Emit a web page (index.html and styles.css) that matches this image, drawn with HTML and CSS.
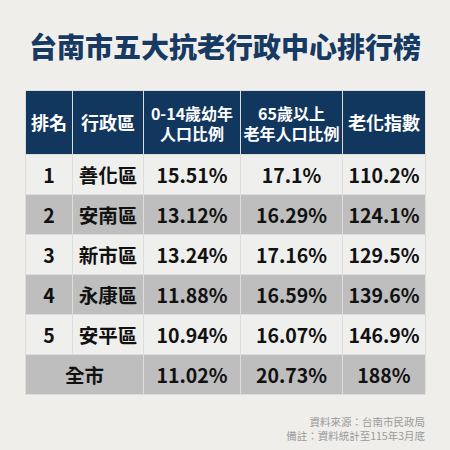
FILE: index.html
```html
<!DOCTYPE html>
<html lang="zh-Hant">
<head>
    <meta charset="UTF-8">
    <title>台南市五大抗老行政中心排行榜</title>
    <link rel="stylesheet" href="styles.css">
</head>
<body>
    <section class="board">
        <h1 class="title">台南市五大抗老行政中心排行榜</h1>
        <table class="rank">
            <colgroup>
                <col class="c-rank">
                <col class="c-area">
                <col class="c-young">
                <col class="c-old">
                <col class="c-index">
            </colgroup>
            <thead>
                <tr>
                    <th>排名</th>
                    <th>行政區</th>
                    <th class="two">0-14歲幼年<br>人口比例</th>
                    <th class="two">65歲以上<br>老年人口比例</th>
                    <th>老化指數</th>
                </tr>
            </thead>
            <tbody>
                <tr class="light">
                    <td>1</td><td>善化區</td><td>15.51%</td><td>17.1%</td><td>110.2%</td>
                </tr>
                <tr class="dark">
                    <td>2</td><td>安南區</td><td>13.12%</td><td>16.29%</td><td>124.1%</td>
                </tr>
                <tr class="light">
                    <td>3</td><td>新市區</td><td>13.24%</td><td>17.16%</td><td>129.5%</td>
                </tr>
                <tr class="dark">
                    <td>4</td><td>永康區</td><td>11.88%</td><td>16.59%</td><td>139.6%</td>
                </tr>
                <tr class="light">
                    <td>5</td><td>安平區</td><td>10.94%</td><td>16.07%</td><td>146.9%</td>
                </tr>
                <tr class="dark">
                    <td colspan="2">全市</td><td>11.02%</td><td>20.73%</td><td>188%</td>
                </tr>
            </tbody>
        </table>
        <div class="note">
            <p>資料來源：台南市民政局</p>
            <p>備註：資料統計至115年3月底</p>
        </div>
    </section>
</body>
</html>
```

FILE: styles.css
```css
*{
    margin: 0;
    padding: 0;
    box-sizing: border-box;
}
html{
    font-family: "Noto Sans CJK TC", "Noto Sans", sans-serif;
    background: #efeeeb;
}
body{
    width: 450px;
    height: 450px;
    overflow: hidden;
}
.board{
    padding: 28px 25px 0 25px;
}
.board .title{
    text-align: center;
    white-space: nowrap;
    font-size: 28px;
    line-height: 36px;
    font-weight: 900;
    color: #173a62;
    text-shadow: 0 0 2px #fff;
    margin: 0 -10px 26px;
}

/*---表格-------*/
.rank{
    width: 400px;
    border-collapse: collapse;
    table-layout: fixed;
}
.rank .c-rank{ width: 47px; }
.rank .c-area{ width: 71px; }
.rank .c-young{ width: 97px; }
.rank .c-old{ width: 102px; }
.rank .c-index{ width: 83px; }
.rank th,
.rank td{
    border: 1px solid #dedddb;
    text-align: center;
    font-weight: 700;
}
.rank th{
    height: 64px;
    background: #12375f;
    color: #fff;
    font-size: 18px;
    line-height: 21px;
}
.rank th.two{
    font-size: 16px;
    line-height: 20px;
}
.rank td{
    height: 40px;
    font-size: 19.5px;
    color: #111;
}
.rank .light td{
    background: #efefed;
}
.rank .dark td{
    background: #bebebe;
}

/*---註記-------*/
.note{
    margin-top: 20px;
    text-align: right;
    font-size: 10.5px;
    line-height: 14px;
    color: #9a9a9a;
}
```
